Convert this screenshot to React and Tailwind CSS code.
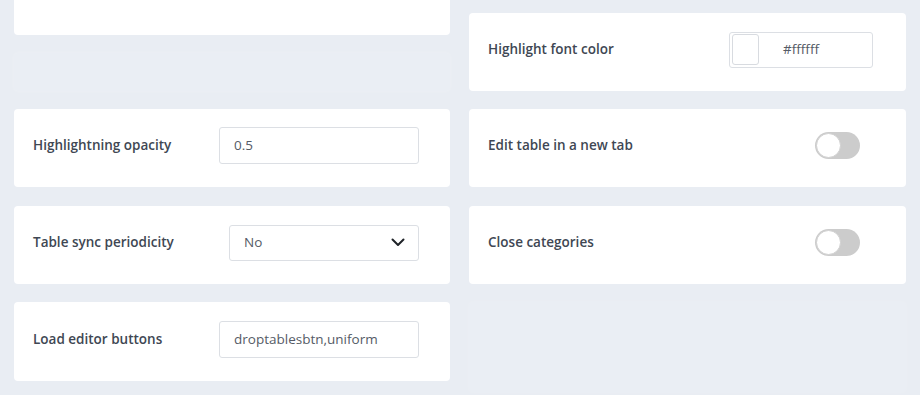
import React from 'react';

const font = { fontFamily: '"Open Sans", "Noto Sans", sans-serif' };

function Card({ label, children, right = 'pr-[31px]', extra = '' }) {
  return (
    <div className={`h-[78px] bg-white rounded-[4px] flex items-center justify-between pl-[19px] pb-[5px] ${right} ${extra}`}>
      <div className="text-[13.5px] font-semibold text-[#404753]">{label}</div>
      {children}
    </div>
  );
}

function TextBox({ value }) {
  return (
    <div className="w-[200px] h-[37px] border border-[#dcdfe4] rounded-[3px] flex items-center px-[14px] text-[13.5px] text-[#555b66]">
      {value}
    </div>
  );
}

function Toggle() {
  return (
    <div className="w-[45px] h-[27px] rounded-full bg-[#cccccc] p-[1px] flex items-center">
      <div className="w-[25px] h-[25px] rounded-full bg-white border border-[#d0d0d0]" />
    </div>
  );
}

export default function App() {
  return (
    <div className="w-[920px] h-[395px] overflow-hidden bg-[#e9edf3] px-[14px] grid grid-cols-[436px_437px] gap-x-[19px]" style={font}>
      <div className="flex flex-col">
        <div className="h-[35px] bg-white rounded-b-[4px]" />
        <div className="h-[38px] mt-[18px] rounded-[4px] bg-[#eaeef4] shadow-[0_0_4px_rgba(255,255,255,0.25)]" />
        <Card label="Highlightning opacity" extra="mt-[18px]">
          <TextBox value="0.5" />
        </Card>
        <Card label="Table sync periodicity" extra="mt-[19px]">
          <div className="w-[190px] h-[36px] border border-[#dcdfe4] rounded-[3px] flex items-center justify-between pl-[14px] pr-[13px] text-[13.5px] text-[#555b66]">
            <span>No</span>
            <svg width="14" height="9" viewBox="0 0 14 9" fill="none">
              <path d="M1.5 1.5 L7 7 L12.5 1.5" stroke="#1f2328" strokeWidth="2" strokeLinecap="round" strokeLinejoin="round" />
            </svg>
          </div>
        </Card>
        <Card label="Load editor buttons" extra="mt-[18px] h-[79px]">
          <TextBox value="droptablesbtn,uniform" />
        </Card>
      </div>
      <div className="flex flex-col pt-[13px]">
        <Card label="Highlight font color" right="pr-[33px]">
          <div className="w-[144px] h-[36px] border border-[#dcdfe4] rounded-[3px] flex items-center p-[2px]">
            <div className="w-[27px] h-[31px] border border-[#d8dbe0] rounded-[3px] bg-white" />
            <span className="ml-[24px] text-[13.5px] text-[#555b66]">#ffffff</span>
          </div>
        </Card>
        <Card label="Edit table in a new tab" right="pr-[46px]" extra="mt-[18px]">
          <Toggle />
        </Card>
        <Card label="Close categories" right="pr-[46px]" extra="mt-[19px]">
          <Toggle />
        </Card>
        <div className="h-[90px] mt-[18px] rounded-[4px] bg-[#eaeef4] shadow-[0_0_4px_rgba(255,255,255,0.2)]" />
      </div>
    </div>
  );
}
